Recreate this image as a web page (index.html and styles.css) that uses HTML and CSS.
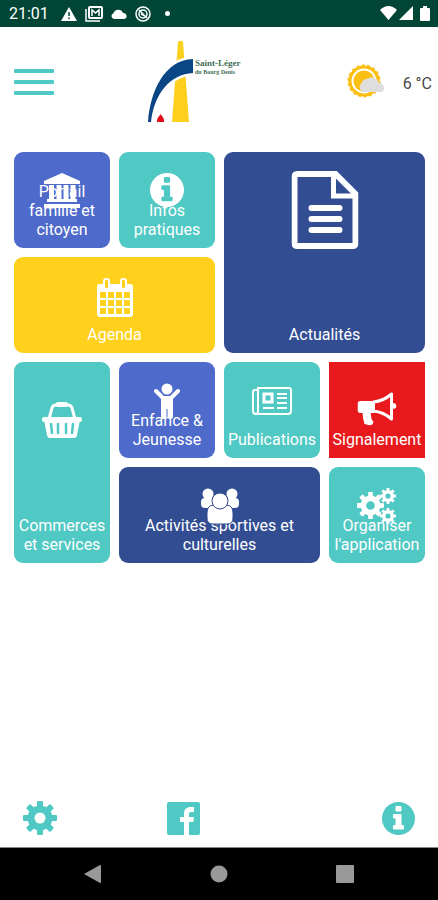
FILE: index.html
```html
<!DOCTYPE html>
<html lang="fr">

<head>
  <meta charset="UTF-8" />
  <meta name="viewport" content="width=device-width, initial-scale=1" />
  <title>Saint-Léger du Bourg Denis</title>
  <link rel="stylesheet" href="styles.css">
</head>

<body>
  <!-- Icônes partagées -->
  <svg class="sprite" aria-hidden="true">
    <symbol id="gear" viewBox="-17 -17 34 34">
      <circle r="9" fill="none" stroke="currentColor" stroke-width="7" />
      <g fill="currentColor">
        <rect x="-3" y="-17" width="6" height="7" rx="1" />
        <rect x="-3" y="-17" width="6" height="7" rx="1" transform="rotate(45)" />
        <rect x="-3" y="-17" width="6" height="7" rx="1" transform="rotate(90)" />
        <rect x="-3" y="-17" width="6" height="7" rx="1" transform="rotate(135)" />
        <rect x="-3" y="-17" width="6" height="7" rx="1" transform="rotate(180)" />
        <rect x="-3" y="-17" width="6" height="7" rx="1" transform="rotate(225)" />
        <rect x="-3" y="-17" width="6" height="7" rx="1" transform="rotate(270)" />
        <rect x="-3" y="-17" width="6" height="7" rx="1" transform="rotate(315)" />
      </g>
    </symbol>
    <symbol id="info" viewBox="0 0 33 33">
      <path fill="currentColor" fill-rule="evenodd"
        d="M16.500 0a16.500 16.500 0 1 0 0 33a16.500 16.500 0 1 0 0-33zM14.500 4h4q1 0 1 1v3.500q0 1-1 1h-4q-1 0-1-1V5q0-1 1-1zM12 12h6.500q1 0 1 1v10h1.500q1 0 1 1v2.500q0 1-1 1h-9q-1 0-1-1V24q0-1 1-1h1.500v-6.500H12q-1 0-1-1V13q0-1 1-1z" />
    </symbol>
  </svg>

  <div class="status-bar">
    <span class="clock">21:01</span>
    <svg width="16" height="14" viewBox="0 0 16 14">
      <path d="M8 0L16 14H0z" fill="#fff" />
      <path d="M8 5v4M8 10.500v1.500" stroke="#004535" stroke-width="1.500" />
    </svg>
    <svg width="18" height="16" viewBox="0 0 18 16" fill="none" stroke="#fff">
      <path d="M1 3v12h14" stroke-width="1.500" />
      <rect x="4" y="1" width="13" height="11" rx="1" stroke-width="2" />
      <path d="M7 10V4l3.500 3L14 4v6" stroke-width="1.500" />
    </svg>
    <svg width="16" height="10" viewBox="0 0 16 10">
      <path d="M3 10a3 3 0 0 1-.5-5.800A5 5 0 0 1 12 4a3 3 0 0 1 1 6z" fill="#fff" />
    </svg>
    <svg width="16" height="16" viewBox="0 0 16 16" fill="none" stroke="#fff">
      <circle cx="8" cy="8" r="7" stroke-width="1.500" />
      <circle cx="8" cy="8" r="4" stroke-width="1.500" />
      <path d="M4 4l8 8M6 8l4 2" stroke-width="1.500" />
    </svg>
    <span class="dot"></span>
    <span class="signals">
      <svg width="17" height="14" viewBox="0 0 17 14">
        <path d="M0 4Q8.500-4 17 4L8.500 14z" fill="#fff" />
      </svg>
      <svg width="14" height="14" viewBox="0 0 14 14">
        <path d="M14 0v14H0z" fill="#fff" />
      </svg>
      <svg class="battery" width="10" height="15" viewBox="0 0 10 15">
        <path d="M3 0h4v2h2q1 0 1 1v11q0 1-1 1H1q-1 0-1-1V3q0-1 1-1h2z" fill="#fff" />
      </svg>
    </span>
  </div>

  <header class="header">
    <button class="menu-button" type="button" aria-label="Menu">
      <span></span>
      <span></span>
      <span></span>
    </button>

    <div class="logo">
      <svg width="46" height="83" viewBox="0 0 46 83">
        <path d="M30 2q2.500-2.500 5 0l6 80H24z" fill="#fdd01e" />
        <path d="M0 82C2 52 16 20 45 19v14C22 34 6 54 3 82z" fill="#0a4586" stroke="#fff" stroke-width="5"
          paint-order="stroke" />
        <path d="M12.500 74c2 3 4 4 3.500 8H9c-.5-4 2-5 3.500-8z" fill="#e30b1c" />
      </svg>
      <div class="logo-text">
        <span class="logo-name">Saint-Léger</span>
        <span class="logo-sub">du Bourg Denis</span>
      </div>
    </div>

    <div class="weather">
      <svg width="38" height="34" viewBox="0 0 38 34">
        <circle cx="17" cy="17" r="14" fill="none" stroke="#fbbf13" stroke-width="3" />
        <circle cx="17" cy="17" r="15.500" fill="none" stroke="#fbbf13" stroke-width="2"
          stroke-dasharray="3 2.410" />
        <circle cx="17" cy="17" r="10.500" fill="#fbbf13" />
        <path d="M16 28a5 5 0 0 1-1-9 5 5 0 0 1 5-4 7.500 7.500 0 0 1 12 4 5 5 0 0 1 3 9z" fill="#dedede" />
      </svg>
      <span class="temperature">6 °C</span>
    </div>
  </header>

  <main class="tiles">
    <a class="tile blue" href="#">
      <svg class="icon" width="38" height="36" viewBox="0 0 38 36" fill="#fff">
        <path d="M19 0l18 8v3H1V8z" />
        <path d="M6 12h5v15H6zM13.500 12h5v15h-5zM20.500 12h5v15h-5zM27.500 12h5v15h-5z" />
        <path d="M4 26h30v3H4zM1 31h36v4H1z" />
      </svg>
      <span>Portail famille et citoyen</span>
    </a>

    <a class="tile teal" href="#">
      <svg class="icon" width="34" height="34">
        <use href="#info" />
      </svg>
      <span>Infos pratiques</span>
    </a>

    <a class="tile navy large" href="#">
      <svg class="icon" width="67" height="78" viewBox="0 0 67 78" fill="none" stroke="#fff">
        <path d="M3 6q0-3 3-3h38l20 20v49q0 3-3 3H6q-3 0-3-3z" stroke-width="6" />
        <path d="M42 3v22h22" stroke-width="5" />
        <path d="M20 37h28M20 48h28M20 59h28" stroke-width="6" stroke-linecap="round" />
      </svg>
      <span>Actualités</span>
    </a>

    <a class="tile yellow wide" href="#">
      <svg class="icon" width="36" height="40" viewBox="0 0 36 40">
        <path fill="#fff" fill-rule="evenodd"
          d="M3 6h30q3 0 3 3v27q0 3-3 3H3q-3 0-3-3V9q0-3 3-3zM3 14v6h6v-6zM11 14v6h6v-6zM19 14v6h6v-6zM27 14v6h6v-6zM3 22v6h6v-6zM11 22v6h6v-6zM19 22v6h6v-6zM27 22v6h6v-6zM3 30v6h6v-6zM11 30v6h6v-6zM19 30v6h6v-6zM27 30v6h6v-6z" />
        <g fill="#ffd01c" stroke="#fff" stroke-width="2">
          <rect x="7" y="1" width="5" height="10" rx="2" />
          <rect x="24" y="1" width="5" height="10" rx="2" />
        </g>
      </svg>
      <span>Agenda</span>
    </a>

    <a class="tile teal tall" href="#">
      <svg class="icon" width="40" height="36" viewBox="0 0 40 36">
        <path d="M7 17L10 6q1-3 4-3h12q3 0 4 3l3 11" fill="none" stroke="#fff" stroke-width="3" />
        <rect x="14" y="0" width="12" height="5" rx="2" fill="#fff" />
        <rect x="0" y="15" width="40" height="5" rx="2" fill="#fff" />
        <path d="M2 18h36l-3 15q-.5 3-3 3H8q-2.500 0-3-3z" fill="#fff" />
        <path d="M9 22l1 9M16 22v9M24 22v9M31 22l-1 9" stroke="#50c8c3" stroke-width="2.500" stroke-linecap="round" />
      </svg>
      <span>Commerces et services</span>
    </a>

    <a class="tile blue" href="#">
      <svg class="icon" width="26" height="37" viewBox="0 0 26 37">
        <circle cx="13" cy="6" r="5.500" fill="#fff" />
        <path d="M2 8l7 7h8l7-7" fill="none" stroke="#fff" stroke-width="4" stroke-linecap="round"
          stroke-linejoin="round" />
        <path d="M7 14h12v20q0 2-2.500 2T13.500 34v-8h-1v8q0 2-3 2T7 34z" fill="#fff" />
      </svg>
      <span>Enfance &amp; Jeunesse</span>
    </a>

    <a class="tile teal" href="#">
      <svg class="icon" width="40" height="36" viewBox="0 -4 40 36" fill="none" stroke="#fff" stroke-width="2">
        <path d="M6 3H3q-2 0-2 2v19q0 3 3 3" />
        <path d="M6 1h31q2 0 2 2v21q0 3-3 3H4q2 0 2-3z" />
        <rect x="12" y="7" width="8" height="8" stroke-width="3" />
        <path d="M25 7h10M25 11h10M25 16h10M25 21h10M11 21h11" />
      </svg>
      <span>Publications</span>
    </a>

    <a class="tile red" href="#">
      <svg class="icon" width="39" height="34" viewBox="0 0 39 34">
        <path d="M3 9h14v12H3q-3 0-3-3v-6q0-3 3-3z" fill="#fff" />
        <path d="M5 20h8l1 7 2 3q-1 4-5 3l-4-1q-2-6-2-12z" fill="#fff" />
        <path d="M16 10Q26 9 34 2v25q-8-7-18-8z" fill="none" stroke="#fff" stroke-width="3"
          stroke-linejoin="round" />
        <path d="M35 11q4 0 4 3t-4 3z" fill="#fff" />
      </svg>
      <span>Signalement</span>
    </a>

    <a class="tile navy wide" href="#">
      <svg class="icon" width="40" height="38" viewBox="0 0 40 38" fill="#fff" stroke="#334d93">
        <g stroke-width="0">
          <circle cx="8" cy="6" r="5.500" />
          <circle cx="32" cy="6" r="5.500" />
          <rect x="1" y="10" width="14" height="10" rx="4" />
          <rect x="25" y="10" width="14" height="10" rx="4" />
        </g>
        <path d="M13 17h14q6 1 6 8v5q0 6-6 6H13q-6 0-6-6v-5q0-7 6-8z" />
        <circle cx="20" cy="13" r="8" />
      </svg>
      <span>Activités sportives et culturelles</span>
    </a>

    <a class="tile teal" href="#">
      <svg class="icon" width="40" height="36" viewBox="0 0 40 36">
        <use href="#gear" x="0" y="4" width="27" height="27" />
        <use href="#gear" x="23" y="0" width="16" height="16" />
        <use href="#gear" x="23" y="20" width="16" height="16" />
      </svg>
      <span>Organiser l'application</span>
    </a>
  </main>

  <footer class="toolbar">
    <button type="button" aria-label="Paramètres">
      <svg width="34" height="34">
        <use href="#gear" />
      </svg>
    </button>
    <a class="facebook" href="#" aria-label="Facebook">
      <svg width="33" height="33" viewBox="0 0 33 33">
        <rect width="33" height="33" rx="2" fill="#50c8c3" />
        <path d="M17 33V20h-4v-5h4v-3c0-5 2.500-7 7-7h3v5h-2.500c-2 0-2.500.8-2.500 2.500V15h5l-.7 5H22v13z" fill="#fff" />
      </svg>
    </a>
    <button class="about" type="button" aria-label="Informations">
      <svg width="33" height="33">
        <use href="#info" />
      </svg>
    </button>
  </footer>

  <nav class="system-nav">
    <button type="button" aria-label="Retour">
      <svg width="18" height="18" viewBox="0 0 18 18" fill="#999">
        <path d="M16 0q1 0 1 1v16q0 1-1 1L0 9z" />
      </svg>
    </button>
    <button type="button" aria-label="Accueil">
      <svg width="18" height="18" viewBox="0 0 18 18" fill="#999">
        <circle cx="9" cy="9" r="8.500" />
      </svg>
    </button>
    <button type="button" aria-label="Applications récentes">
      <svg width="18" height="18" viewBox="0 0 18 18" fill="#999">
        <rect width="18" height="18" rx="1" />
      </svg>
    </button>
  </nav>
</body>

</html>
```
FILE: styles.css
```css
* {
  box-sizing: border-box;
}

body {
  margin: 0;
  min-height: 100vh;
  display: flex;
  flex-direction: column;
  background-color: #fff;
  font-family: Roboto, "Liberation Sans", sans-serif;
}

svg {
  display: block;
  flex-shrink: 0;
}

button {
  background: none;
  border: none;
  padding: 0;
  color: inherit;
  cursor: pointer;
}

.sprite {
  position: absolute;
  width: 0;
  height: 0;
}

.status-bar {
  display: flex;
  align-items: center;
  gap: 8px;
  height: 27px;
  padding: 0 8px 0 9px;
  background-color: #004535;
  color: #fff;
}

.clock {
  margin-right: 4px;
  font-size: 16px;
}

.dot {
  width: 5px;
  height: 5px;
  margin-left: 6px;
  border-radius: 50%;
  background-color: #fff;
}

.signals {
  display: flex;
  gap: 2px;
  margin-left: auto;
}

.battery {
  margin-left: 5px;
}

.header {
  display: flex;
  align-items: center;
  height: 108px;
  padding: 0 6px 0 14px;
}

.menu-button {
  display: flex;
  flex-direction: column;
  gap: 7px;
  width: 40px;
  margin-right: 94px;
  padding-top: 2px;
}

.menu-button span {
  height: 4px;
  border-radius: 1px;
  background-color: #50c8c3;
}

.logo {
  display: flex;
}

.logo-text {
  display: flex;
  flex-direction: column;
  padding: 19px 0 0 1px;
  font-family: "Liberation Serif", serif;
  font-weight: bold;
  color: #44705a;
}

.logo-name {
  font-size: 9px;
  line-height: 9px;
}

.logo-sub {
  font-size: 6px;
  line-height: 8px;
}

.weather {
  display: flex;
  align-items: center;
  gap: 18px;
  margin-left: auto;
}

.temperature {
  padding-top: 4px;
  font-size: 16px;
  color: #4a4a4a;
}

.tiles {
  flex: 1;
  display: grid;
  grid-template-columns: repeat(4, minmax(0, 1fr));
  grid-auto-rows: 96px;
  gap: 9px;
  padding: 17px 13px 17px 14px;
}

.tile {
  position: relative;
  display: flex;
  align-items: flex-end;
  justify-content: center;
  padding: 0 3px 9px;
  border-radius: 9px;
  color: #fff;
  font-size: 16px;
  line-height: 19px;
  text-align: center;
  text-decoration: none;
}

/* l'icône passe par-dessus le libellé */
.icon {
  position: absolute;
  top: 21px;
  left: 50%;
  transform: translateX(-50%);
}

.wide {
  grid-column: span 2;
}

.tall {
  grid-row: span 2;
}

.tall .icon {
  top: 40px;
}

.large {
  grid-column: span 2;
  grid-row: span 2;
}

.large .icon {
  top: 19px;
}

.blue {
  background-color: #4e6aca;
}

.teal {
  background-color: #50c8c3;
}

.navy {
  background-color: #334d93;
}

.yellow {
  background-color: #ffd01c;
}

.red {
  background-color: #e8191c;
  border-radius: 0;
}

.red .icon {
  top: 30px;
}

.toolbar {
  display: grid;
  grid-template-columns: repeat(6, 1fr);
  align-items: center;
  justify-items: center;
  height: 58px;
  padding: 0 4px;
  color: #50c8c3;
}

.facebook {
  grid-column: 3;
}

.about {
  grid-column: 6;
}

.system-nav {
  display: grid;
  grid-template-columns: repeat(3, 1fr);
  align-items: center;
  justify-items: center;
  height: 53px;
  padding: 0 30px;
  border-top: 1px solid #888;
  background-color: #000;
}
```
